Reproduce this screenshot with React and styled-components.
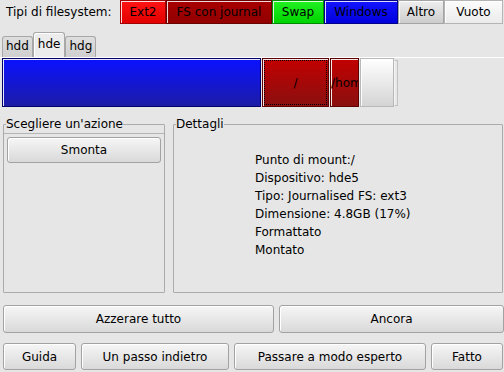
import React from "react";
import styled, { createGlobalStyle } from "styled-components";

// Partition types shown in the top legend
const fsTypes = [
  { label: "Ext2", w: 46, top: "#ff1414", bottom: "#e20000", edge: "#a00000" },
  { label: "FS con journal", w: 106, top: "#a80000", bottom: "#920000", edge: "#6a0000" },
  { label: "Swap", w: 52, top: "#22f022", bottom: "#00d400", edge: "#008a00" },
  { label: "Windows", w: 74, top: "#1414ff", bottom: "#0000dc", edge: "#00008a" },
  { label: "Altro", w: 46, top: "#eeeeee", bottom: "#cdcdcd", edge: "#a4a4a4" },
  { label: "Vuoto", w: 59, top: "#fcfcfc", bottom: "#ebebeb", edge: "#b4b4b4" },
];

const disks = ["hdd", "hde", "hdg"];

const details = [
  "Punto di mount:/",
  "Dispositivo: hde5",
  "Tipo: Journalised FS: ext3",
  "Dimensione: 4.8GB (17%)",
  "Formattato",
  "Montato",
];

function App() {
  return (
    <>
      <GlobalStyle />
      <Window>
        {/* legend of filesystem colours */}
        <TypeBar>
          <TypeLabel>Tipi di filesystem:</TypeLabel>
          {fsTypes.map((t) => (
            <TypeChip key={t.label} $w={t.w} $top={t.top} $bottom={t.bottom} $edge={t.edge}>
              {t.label}
            </TypeChip>
          ))}
        </TypeBar>

        {/* disk tabs */}
        <Tabs>
          {disks.map((d) => (
            <Tab key={d} $active={d === "hde"}>
              {d}
            </Tab>
          ))}
        </Tabs>

        {/* partition map of the selected disk */}
        <DiskPane>
          <Segment $w={259} $top="#0a12ff" $bottom="#1c1ca6" $edge="#00006a" />
          <Segment $w={67} $top="#c20000" $bottom="#8a1010" $edge="#5e0000" $focus>
            /
          </Segment>
          <Segment $w={29} $top="#c20000" $bottom="#8a1010" $edge="#5e0000" $left>
            /home
          </Segment>
          <Segment $w={34} $top="#ffffff" $bottom="#d4d4d4" $edge="#b8b8b8" />
          <Sliver />
        </DiskPane>

        <Panels>
          <ActionBox>
            <Legend>Scegliere un'azione</Legend>
            <ActionList>
              <Button $h={26}>Smonta</Button>
            </ActionList>
          </ActionBox>
          <DetailBox>
            <Legend>Dettagli</Legend>
            <DetailText>
              {details.map((line) => (
                <div key={line}>{line}</div>
              ))}
            </DetailText>
          </DetailBox>
        </Panels>

        <ButtonRow $mt={12}>
          <Button $w={271} $h={28}>Azzerare tutto</Button>
          <Button $w={225} $h={28}>Ancora</Button>
        </ButtonRow>
        <ButtonRow $mt={10}>
          <Button $w={73} $h={27}>Guida</Button>
          <Button $w={148} $h={27}>Un passo indietro</Button>
          <Button $w={192} $h={27}>Passare a modo esperto</Button>
          <Button $w={72} $h={27}>Fatto</Button>
        </ButtonRow>
      </Window>
    </>
  );
}

export default App;

const GlobalStyle = createGlobalStyle`
  html, body {
    margin: 0;
    background: #e6e6e6;
  }
`;

const Window = styled.div`
  width: 504px;
  height: 372px;
  overflow: hidden;
  background: #e6e6e6;
  font-family: "DejaVu Sans", "Liberation Sans", sans-serif;
  font-size: 12px;
  color: #000;
`;

const TypeBar = styled.div`
  display: flex;
  height: 24px;
`;

const TypeLabel = styled.div`
  width: 114px;
  padding-left: 6px;
  display: flex;
  align-items: center;
`;

const TypeChip = styled.div`
  box-sizing: border-box;
  width: ${(p) => p.$w}px;
  display: flex;
  align-items: center;
  justify-content: center;
  border: 1px solid ${(p) => p.$edge};
  box-shadow: inset 1px 1px 0 rgba(255, 255, 255, 0.85);
  background: linear-gradient(${(p) => p.$top}, ${(p) => p.$bottom});
  white-space: nowrap;
`;

const Tabs = styled.div`
  display: flex;
  align-items: flex-end;
  height: 25px;
  margin-top: 8px;
  padding-left: 2px;
`;

const Tab = styled.div`
  box-sizing: border-box;
  height: ${(p) => (p.$active ? 25 : 21)}px;
  padding: ${(p) => (p.$active ? "0 4px 2px" : "0 3px 2px")};
  display: flex;
  align-items: center;
  border: 1px solid #a8a8a8;
  border-bottom: none;
  border-radius: 3px 3px 0 0;
  background: ${(p) =>
    p.$active ? "#ececec" : "linear-gradient(#dedede, #cfcfcf)"};
  box-shadow: ${(p) => (p.$active ? "inset 1px 1px 0 #fff" : "none")};
`;

const DiskPane = styled.div`
  display: flex;
  align-items: flex-start;
  height: 49px;
  padding-left: 2px;
  border-top: 1px solid #ffffff;
`;

const Segment = styled.div`
  box-sizing: border-box;
  width: ${(p) => p.$w}px;
  height: 49px;
  margin-right: 1px;
  display: flex;
  align-items: center;
  justify-content: ${(p) => (p.$left ? "flex-start" : "center")};
  overflow: hidden;
  white-space: nowrap;
  border: 1px solid ${(p) => p.$edge};
  box-shadow: inset 1px 1px 0 rgba(255, 255, 255, 0.9);
  background: linear-gradient(${(p) => p.$top}, ${(p) => p.$bottom});
  outline: ${(p) => (p.$focus ? "1px dotted #000" : "none")};
  outline-offset: -3px;
`;

const Sliver = styled.div`
  box-sizing: border-box;
  width: 4px;
  height: 46px;
  margin-top: 2px;
  margin-left: -1px;
  border: 1px solid #c2c2c2;
  border-left-color: #f4f4f4;
  background: #e8e8e8;
`;

const Panels = styled.div`
  display: flex;
  gap: 8px;
  margin-top: 10px;
  padding-left: 3px;
`;

const GroupBox = styled.fieldset`
  box-sizing: border-box;
  margin: 0;
  height: 176px;
  padding: 0 2px 2px;
  border: 1px solid #ababab;
  border-radius: 1px;
  min-width: 0;
`;

const ActionBox = styled(GroupBox)`
  width: 162px;
`;

const DetailBox = styled(GroupBox)`
  width: 330px;
`;

const Legend = styled.legend`
  padding: 0;
  line-height: 14px;
  font-size: 12px;
`;

const ActionList = styled.div`
  margin: 2px -2px 0;
  padding: 3px 3px 0;
  border-top: 1px solid #b4b4b4;
`;

const DetailText = styled.div`
  width: 166px;
  margin: 20px auto 0;
  line-height: 18px;
`;

const ButtonRow = styled.div`
  display: flex;
  gap: 5px;
  margin-top: ${(p) => p.$mt}px;
  padding-left: 3px;
`;

const Button = styled.div`
  box-sizing: border-box;
  width: ${(p) => (p.$w ? `${p.$w}px` : "auto")};
  height: ${(p) => p.$h}px;
  display: flex;
  align-items: center;
  justify-content: center;
  border: 1px solid #a2a2a2;
  border-radius: 3px;
  background: linear-gradient(#f6f6f6, #d9d9d9);
  box-shadow: inset 1px 1px 0 #ffffff;
  white-space: nowrap;
`;
